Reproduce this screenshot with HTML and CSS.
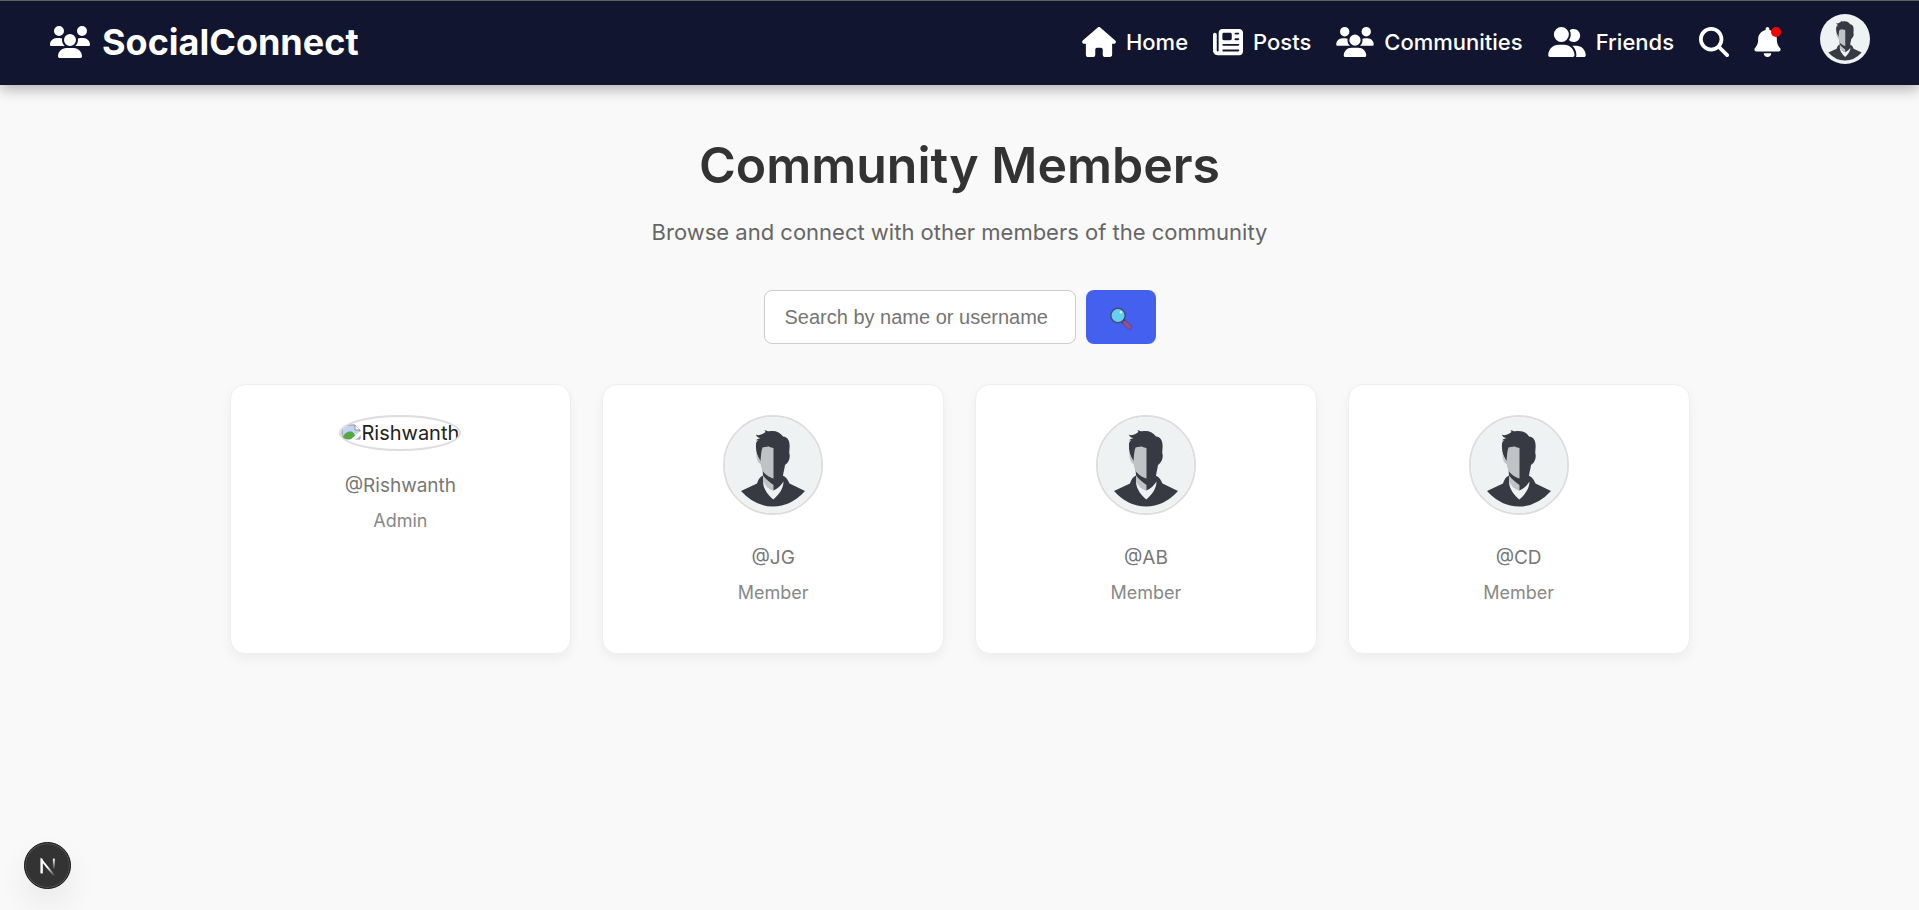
FILE: index.html
```html
<!DOCTYPE html>
<html lang="en">
<head>
<meta charset="utf-8">
<meta name="viewport" content="width=device-width, initial-scale=1">
<title>SocialConnect</title>
<link rel="stylesheet" href="styles.css">
</head>
<body>
<svg class="sprite" aria-hidden="true">
  <symbol id="users" viewBox="0 0 640 512"><path d="M144 0a80 80 0 1 1 0 160A80 80 0 1 1 144 0zM512 0a80 80 0 1 1 0 160A80 80 0 1 1 512 0zM0 298.7C0 239.8 47.8 192 106.7 192l42.7 0c15.9 0 31 3.5 44.6 9.7c-1.3 7.2-1.9 14.7-1.9 22.3c0 38.2 16.8 72.5 43.3 96c-.2 0-.4 0-.7 0L21.3 320C9.6 320 0 310.4 0 298.7zM405.3 320c-.2 0-.4 0-.7 0c26.6-23.5 43.3-57.8 43.3-96c0-7.6-.7-15-1.9-22.3c13.6-6.3 28.7-9.7 44.6-9.7l42.7 0C592.2 192 640 239.8 640 298.7c0 11.8-9.6 21.3-21.3 21.3l-213.3 0zM224 224a96 96 0 1 1 192 0 96 96 0 1 1 -192 0zM128 485.3C128 411.7 187.7 352 261.3 352l117.3 0C452.3 352 512 411.7 512 485.3c0 14.7-11.9 26.7-26.7 26.7l-330.7 0c-14.7 0-26.7-11.9-26.7-26.7z"/></symbol>
  <symbol id="house" viewBox="0 0 576 512"><path d="M575.8 255.5c0 18-15 32.1-32 32.1l-32 0 .7 160.2c0 2.7-.2 5.4-.5 8.1l0 16.2c0 22.1-17.9 40-40 40l-16 0c-1.1 0-2.2 0-3.3-.1c-1.4 .1-2.8 .1-4.2 .1L416 512l-24 0c-22.1 0-40-17.9-40-40l0-24 0-64c0-17.7-14.3-32-32-32l-64 0c-17.7 0-32 14.3-32 32l0 64 0 24c0 22.1-17.9 40-40 40l-24 0-31.9 0c-1.5 0-3-.1-4.5-.2c-1.2 .1-2.4 .2-3.6 .2l-16 0c-22.1 0-40-17.9-40-40l0-112c0-.9 0-1.9 .1-2.8l0-69.7-32 0c-18 0-32-14-32-32.1c0-9 3-17 10-24L266.4 8c7-7 15-8 22-8s15 2 21 7L564.8 231.5c8 7 12 15 11 24z"/></symbol>
  <symbol id="newspaper" viewBox="0 0 512 512"><path d="M96 96c0-35.3 28.7-64 64-64l288 0c35.3 0 64 28.7 64 64l0 320c0 35.3-28.7 64-64 64L80 480c-44.2 0-80-35.8-80-80L0 128c0-17.7 14.3-32 32-32s32 14.3 32 32l0 272c0 8.8 7.2 16 16 16s16-7.2 16-16L96 96zm64 24l0 80c0 13.3 10.7 24 24 24l112 0c13.3 0 24-10.7 24-24l0-80c0-13.3-10.7-24-24-24L184 96c-13.3 0-24 10.7-24 24zm208-8c0 8.8 7.2 16 16 16l48 0c8.8 0 16-7.2 16-16s-7.2-16-16-16l-48 0c-8.8 0-16 7.2-16 16zm0 96c0 8.8 7.2 16 16 16l48 0c8.8 0 16-7.2 16-16s-7.2-16-16-16l-48 0c-8.8 0-16 7.2-16 16zM160 304c0 8.8 7.2 16 16 16l256 0c8.8 0 16-7.2 16-16s-7.2-16-16-16l-256 0c-8.8 0-16 7.2-16 16zm0 96c0 8.8 7.2 16 16 16l256 0c8.8 0 16-7.2 16-16s-7.2-16-16-16l-256 0c-8.8 0-16 7.2-16 16z"/></symbol>
  <symbol id="friends" viewBox="0 0 640 512"><path d="M96 128a128 128 0 1 1 256 0A128 128 0 1 1 96 128zM0 482.3C0 383.8 79.8 304 178.3 304l91.4 0C368.2 304 448 383.8 448 482.3c0 16.4-13.3 29.7-29.7 29.7L29.7 512C13.3 512 0 498.7 0 482.3zM609.3 512l-137.8 0c5.4-9.4 8.6-20.3 8.6-32l0-8c0-60.7-27.1-115.2-69.8-151.8c2.4-.1 4.7-.2 7.1-.2l61.4 0C567.8 320 640 392.2 640 481.3c0 17-13.8 30.7-30.7 30.7zM432 256c-31 0-59-12.6-79.3-32.9C372.4 196.5 384 163.6 384 128c0-26.8-6.6-52.1-18.3-74.3C384.3 40.1 407.2 32 432 32c61.9 0 112 50.1 112 112s-50.1 112-112 112z"/></symbol>
  <symbol id="search" viewBox="0 0 512 512"><path d="M416 208c0 45.9-14.9 88.3-40 122.7L502.6 457.4c12.5 12.5 12.5 32.8 0 45.3s-32.8 12.5-45.3 0L330.7 376c-34.4 25.2-76.8 40-122.7 40C93.1 416 0 322.9 0 208S93.1 0 208 0S416 93.1 416 208zM208 352a144 144 0 1 0 0-288 144 144 0 1 0 0 288z"/></symbol>
  <symbol id="bell" viewBox="0 0 448 512"><path d="M224 0c-17.7 0-32 14.3-32 32l0 19.2C119 66 64 130.6 64 208l0 18.8c0 47-17.3 92.4-48.5 127.6l-7.4 8.3c-8.4 9.4-10.4 22.9-5.3 34.4S19.4 416 32 416l384 0c12.6 0 24-7.4 29.2-18.9s3.1-25-5.3-34.4l-7.4-8.3C401.3 319.2 384 273.9 384 226.8l0-18.8c0-77.4-55-142-128-156.8L256 32c0-17.7-14.3-32-32-32zm45.3 493.3c12-12 18.7-28.3 18.7-45.3l-64 0-64 0c0 17 6.7 33.3 18.7 45.3s28.3 18.7 45.3 18.7s33.3-6.7 45.3-18.7z"/></symbol>
  <symbol id="person" viewBox="2 2 96 96">
    <rect width="100" height="100" fill="#eef2f3"/>
    <path fill="#373a43" d="M33 19.5C35 21 38 20 41 18C43 17 42.500 16 41 15.300C43 15 44.500 16.500 46 16.300C52 15 57 17 60 21.500C65 22 66.800 26 66.600 32L66.200 38C67.500 41 66.500 47 62 50C61.500 54 60.500 56 60 61C63 61.500 65 65 66.500 68.500L82 76Q68 91.500 50 91.500Q32 91.500 18 76L34 68.500C35 65 37 61.500 40 60.500L39.500 54L37 46C34 41 32.500 35 33 29C33 27 34 26 35.500 25L33 25.500C34 24 36 23.500 37.500 23C35 23 33.500 21.500 33 19.500Z"/>
    <path fill="#bfc3c6" d="M39.500 32.500C42 31.500 44 31.500 45.500 31.800L44 30.500C46 31.500 47 32.500 50.500 33V63.500C46 62.500 42 59 39.500 56L37.500 49C35 48 33 43 33.500 38.500L37.500 46C38 41 38 36 39.500 32.500ZM40 60.500C43 64.500 47 67.500 50.500 70V75.500C46 74 42 71 40 67Z"/>
    <path fill="#eef2f3" d="M40 66.500C42.500 71 46 74 50.500 75.500C55 73.500 58 70.500 60.500 66.500C60.500 74 55.500 80 50.300 84.500C45 80 40 73.500 40 66.500Z"/>
  </symbol>
</svg>

<header class="header">
  <a class="brand" href="#"><svg class="icon brand-icon"><use href="#users"/></svg>SocialConnect</a>
  <nav class="nav">
    <a class="nav-link" href="#"><svg class="icon icon-house"><use href="#house"/></svg>Home</a>
    <a class="nav-link" href="#"><svg class="icon"><use href="#newspaper"/></svg>Posts</a>
    <a class="nav-link" href="#"><svg class="icon icon-wide"><use href="#users"/></svg>Communities</a>
    <a class="nav-link" href="#"><svg class="icon icon-wide"><use href="#friends"/></svg>Friends</a>
    <a class="nav-link" href="#" aria-label="Search"><svg class="icon"><use href="#search"/></svg></a>
    <a class="nav-link bell" href="#" aria-label="Notifications"><svg class="icon icon-bell"><use href="#bell"/></svg><span class="dot"></span></a>
    <a class="profile" href="#" aria-label="Profile"><svg><use href="#person"/></svg></a>
  </nav>
</header>

<main class="main">
  <h1 class="title">Community Members</h1>
  <p class="subtitle">Browse and connect with other members of the community</p>
  <form class="search">
    <input class="search-input" type="text" aria-label="Search members" placeholder="Search by name or username">
    <button class="search-button" type="button" aria-label="Search">
      <svg class="lens" viewBox="0 0 24 24">
        <path d="M14.500 15.500L20.500 21" stroke="#55406f" stroke-width="5" stroke-linecap="round"/>
        <path d="M16 17L20.500 21" stroke="#94508c" stroke-width="4" stroke-linecap="round"/>
        <circle cx="9" cy="9.500" r="7.200" fill="#64d0ee" stroke="#4b4a78" stroke-width="1.500"/>
        <circle cx="12" cy="6.300" r="1.300" fill="#c9f1fb"/>
      </svg>
    </button>
  </form>
  <section class="grid">
    <article class="card">
      <div class="picture"><span class="missing"><svg class="missing-icon" viewBox="0 0 20 20">
        <path d="M1 2H14L19 7V16H1Z" fill="#c3d3f5" stroke="#909090"/>
        <path d="M14 2V7H19" fill="#fff" stroke="#909090"/>
        <path d="M1 16C3 10 7 8 10 8.500S14 12 15 16Z" fill="#55a83c"/>
        <path d="M9 17L20 7.500V12L14 17Z" fill="#fff"/>
      </svg>Rishwanth</span></div>
      <p class="username">@Rishwanth</p>
      <p class="role">Admin</p>
    </article>
    <article class="card">
      <div class="picture"><svg class="avatar"><use href="#person"/></svg></div>
      <p class="username">@JG</p>
      <p class="role">Member</p>
    </article>
    <article class="card">
      <div class="picture"><svg class="avatar"><use href="#person"/></svg></div>
      <p class="username">@AB</p>
      <p class="role">Member</p>
    </article>
    <article class="card">
      <div class="picture"><svg class="avatar"><use href="#person"/></svg></div>
      <p class="username">@CD</p>
      <p class="role">Member</p>
    </article>
  </section>
</main>

<button class="dev-badge" type="button" aria-label="Open developer tools">
  <svg viewBox="0 0 46 46" fill="none">
    <defs>
      <linearGradient id="diag" gradientUnits="userSpaceOnUse" x1="24" y1="24" x2="31" y2="33"><stop stop-color="#fff"/><stop offset="1" stop-color="#fff" stop-opacity="0"/></linearGradient>
      <linearGradient id="stem" gradientUnits="userSpaceOnUse" x1="0" y1="16" x2="0" y2="27"><stop stop-color="#fff"/><stop offset="1" stop-color="#fff" stop-opacity="0"/></linearGradient>
    </defs>
    <path d="M17 31V17.500L30.500 34" stroke="url(#diag)" stroke-width="2"/>
    <path d="M17 31V16" stroke="#fff" stroke-width="2"/>
    <path d="M29.500 16V29" stroke="url(#stem)" stroke-width="2"/>
  </svg>
</button>
</body>
</html>
```
FILE: styles.css
```css
* {
  box-sizing: border-box;
}

body {
  margin: 0;
  min-height: 100vh;
  background: #f9f9f9;
  color: #222;
  font: 20px/30px Inter, "Liberation Sans", sans-serif;
}

a {
  color: inherit;
  text-decoration: none;
}

.sprite {
  position: absolute;
  width: 0;
  height: 0;
}

.header {
  display: flex;
  align-items: center;
  justify-content: space-between;
  height: 85px;
  padding: 0 49px 2px 50px;
  border-top: 1px solid #5f5f5f;
  background: #12152f;
  color: #fff;
  box-shadow: 0 5px 12px rgba(40, 25, 40, 0.3);
}

.brand {
  display: flex;
  align-items: center;
  gap: 12px;
  font-size: 36px;
  font-weight: 700;
}

.icon {
  display: block;
  width: 30px;
  height: 30px;
  fill: currentColor;
}

.brand-icon {
  width: 40px;
  height: 32px;
}

.icon-house {
  width: 34px;
}

.icon-wide {
  width: 38px;
}

.icon-bell {
  width: 27px;
}

.nav {
  display: flex;
  align-items: center;
  gap: 25px;
  font-size: 22px;
  font-weight: 500;
}

.nav-link {
  display: flex;
  align-items: center;
  gap: 10px;
}

.bell {
  position: relative;
}

.dot {
  position: absolute;
  top: 0;
  right: 0;
  width: 10px;
  height: 10px;
  border-radius: 50%;
  background: #f00;
}

.profile {
  width: 50px;
  height: 50px;
  margin: 0 0 6px 14px;
}

.profile svg {
  display: block;
  width: 100%;
  height: 100%;
  border-radius: 50%;
}

.main {
  max-width: 1500px;
  margin: 0 auto;
  padding: 50px 20px;
  text-align: center;
}

.title {
  margin: 0 0 20px;
  color: #333;
  font-size: 50px;
  font-weight: 600;
  line-height: 60px;
}

.subtitle {
  margin: 0 0 41px;
  color: #666;
  font-size: 22px;
  line-height: 34px;
}

.search {
  display: flex;
  justify-content: center;
  gap: 10px;
  margin-bottom: 40px;
}

.search-input {
  width: 312px;
  height: 54px;
  padding: 0 20px;
  border: 1px solid #ccc;
  border-radius: 8px;
  background: #fff;
  font: 20px "Liberation Sans", Arial, sans-serif;
}

.search-input::placeholder {
  color: #757575;
}

.search-button {
  display: flex;
  align-items: center;
  justify-content: center;
  width: 70px;
  padding: 2px 0 0;
  border: 0;
  border-radius: 8px;
  background: #4361ee;
}

.lens {
  width: 24px;
  height: 24px;
}

.grid {
  display: grid;
  grid-template-columns: repeat(auto-fit, minmax(280px, 1fr));
  gap: 31px;
}

.card {
  padding: 30px 30px 46px;
  border: 1px solid #eee;
  border-radius: 15px;
  background: #fff;
  box-shadow: 0 5px 12px rgba(0, 0, 0, 0.05);
}

.picture {
  margin-bottom: 21px;
}

.avatar {
  width: 100px;
  height: 100px;
  border: 2px solid #ddd;
  border-radius: 50%;
}

.missing {
  display: inline-flex;
  align-items: center;
  height: 36px;
  border: 2px solid #ddd;
  border-radius: 50%;
  overflow: hidden;
}

.missing-icon {
  width: 20px;
  height: 20px;
}

.username {
  margin: 0 0 7px;
  color: #777;
  font-size: 19px;
  line-height: 28px;
}

.role {
  margin: 0;
  color: #888;
  font-size: 18px;
  line-height: 28px;
}

.dev-badge {
  position: fixed;
  left: 24px;
  bottom: 21px;
  width: 47px;
  height: 47px;
  padding: 0;
  border: 1px solid #111;
  border-radius: 50%;
  background: #333;
  box-shadow: inset 0 0 0 1px #555, 0 16px 32px rgba(0, 0, 0, 0.07);
}

.dev-badge svg {
  display: block;
}
```
